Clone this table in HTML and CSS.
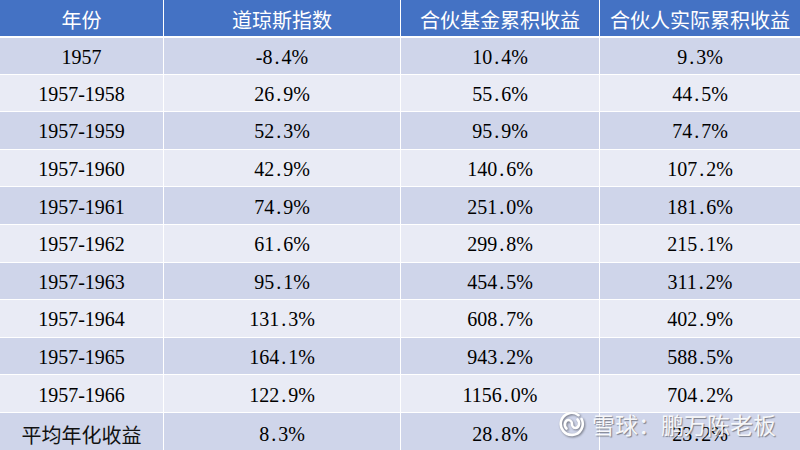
FILE: index.html
```html
<!DOCTYPE html>
<html lang="zh">
<head>
<meta charset="utf-8">
<link rel="stylesheet" href="styles.css">
</head>
<body>
<div class="page">
  <div class="tbl">
    <div class="row head">
      <div class="c">年份</div><div class="c">道琼斯指数</div><div class="c">合伙基金累积收益</div><div class="c">合伙人实际累积收益</div>
    </div>
    <div class="row dark"><div class="c">1957</div><div class="c">-8<span class="pt">.</span>4%</div><div class="c">10<span class="pt">.</span>4%</div><div class="c">9<span class="pt">.</span>3%</div></div>
    <div class="row light"><div class="c">1957-1958</div><div class="c">26<span class="pt">.</span>9%</div><div class="c">55<span class="pt">.</span>6%</div><div class="c">44<span class="pt">.</span>5%</div></div>
    <div class="row dark"><div class="c">1957-1959</div><div class="c">52<span class="pt">.</span>3%</div><div class="c">95<span class="pt">.</span>9%</div><div class="c">74<span class="pt">.</span>7%</div></div>
    <div class="row light"><div class="c">1957-1960</div><div class="c">42<span class="pt">.</span>9%</div><div class="c">140<span class="pt">.</span>6%</div><div class="c">107<span class="pt">.</span>2%</div></div>
    <div class="row dark"><div class="c">1957-1961</div><div class="c">74<span class="pt">.</span>9%</div><div class="c">251<span class="pt">.</span>0%</div><div class="c">181<span class="pt">.</span>6%</div></div>
    <div class="row light"><div class="c">1957-1962</div><div class="c">61<span class="pt">.</span>6%</div><div class="c">299<span class="pt">.</span>8%</div><div class="c">215<span class="pt">.</span>1%</div></div>
    <div class="row dark"><div class="c">1957-1963</div><div class="c">95<span class="pt">.</span>1%</div><div class="c">454<span class="pt">.</span>5%</div><div class="c">311<span class="pt">.</span>2%</div></div>
    <div class="row light"><div class="c">1957-1964</div><div class="c">131<span class="pt">.</span>3%</div><div class="c">608<span class="pt">.</span>7%</div><div class="c">402<span class="pt">.</span>9%</div></div>
    <div class="row dark"><div class="c">1957-1965</div><div class="c">164<span class="pt">.</span>1%</div><div class="c">943<span class="pt">.</span>2%</div><div class="c">588<span class="pt">.</span>5%</div></div>
    <div class="row light"><div class="c">1957-1966</div><div class="c">122<span class="pt">.</span>9%</div><div class="c">1156<span class="pt">.</span>0%</div><div class="c">704<span class="pt">.</span>2%</div></div>
    <div class="row dark"><div class="c cjk">平均年化收益</div><div class="c">8<span class="pt">.</span>3%</div><div class="c">28<span class="pt">.</span>8%</div><div class="c">23<span class="pt">.</span>2%</div></div>
  </div>
  <div class="wm">
    <svg class="wm-logo" width="26" height="26" viewBox="0 0 26 26">
      <g fill="none" stroke="#fff" stroke-width="2.6" stroke-linecap="round">
        <path d="M19.5 4.2 A11 11 0 1 0 22.6 8"/>
        <path d="M7.5 17.5 C4.5 14.5 6 9 9.5 9 C12.5 9 13 12.5 13 13 C13 13.5 13.5 17 16.5 17 C20 17 21.5 11.5 18.5 8.5"/>
      </g>
    </svg>
    <span class="wm-text">雪球：鹏万陈老板</span>
  </div>
</div>
</body>
</html>
```
FILE: styles.css
```css
html, body {
  margin: 0;
  padding: 0;
  background: #ffffff;
}
.page {
  position: relative;
  width: 800px;
  height: 450px;
  overflow: hidden;
  background: #ffffff;
}
.tbl {
  display: grid;
  grid-template-columns: 163px 236px 198px 200px;
  grid-template-rows: 36px repeat(11, 36.6px);
  column-gap: 1px;
  row-gap: 1px;
  background: #ffffff;
}
.row {
  display: contents;
}
.c {
  display: flex;
  align-items: center;
  justify-content: center;
  padding-top: 3px;
  box-sizing: border-box;
  font-family: "Liberation Serif", "Noto Sans CJK SC", serif;
  font-size: 20px;
  color: #000000;
  white-space: nowrap;
}
.pt {
  margin: 0 2px;
}
.head .c {
  background: #4472c4;
  color: #ffffff;
  font-family: "Noto Sans CJK SC", sans-serif;
  font-size: 20px;
  padding-top: 2px;
  margin-bottom: 1px;
  height: 36px;
}
.dark .c {
  background: #cfd5ea;
}
.light .c {
  background: #e9ebf5;
}
.c.cjk {
  font-family: "Noto Sans CJK SC", sans-serif;
  color: #111111;
  padding-top: 6px;
}
.dark:last-child .c {
  padding-top: 6px;
}
.head + .row .c {
  margin-top: 1px;
}
.wm {
  position: absolute;
  left: 559px;
  top: 409px;
  display: flex;
  align-items: center;
  gap: 7px;
}
.wm-logo {
  display: block;
  filter: drop-shadow(1px 1px 1px rgba(0, 0, 0, 0.45));
}
.wm-text {
  font-family: "Noto Sans CJK SC", sans-serif;
  font-size: 23px;
  line-height: 30px;
  color: rgba(255, 255, 255, 0.92);
  text-shadow: 1px 1px 1px rgba(0, 0, 0, 0.4);
  letter-spacing: 0px;
}
```
